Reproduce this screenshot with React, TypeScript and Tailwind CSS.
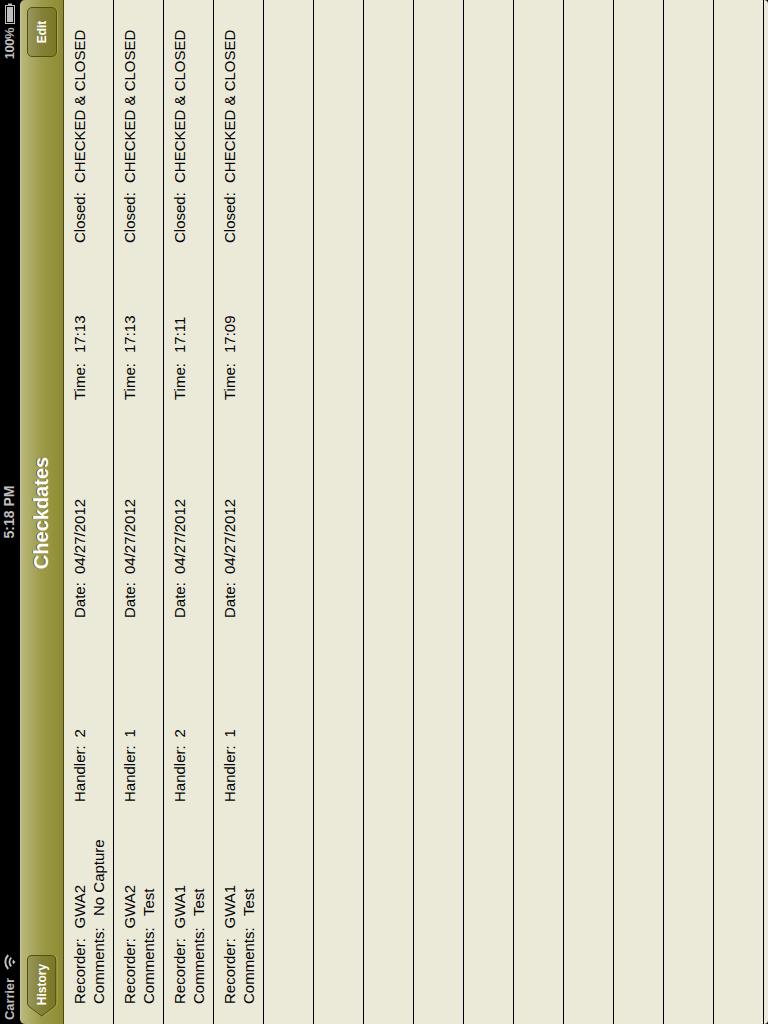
type Entry = { recorder: string; comments: string; handler: string; time: string };

const entries: Entry[] = [
  { recorder: "GWA2", comments: "No Capture", handler: "2", time: "17:13" },
  { recorder: "GWA2", comments: "Test", handler: "1", time: "17:13" },
  { recorder: "GWA1", comments: "Test", handler: "2", time: "17:11" },
  { recorder: "GWA1", comments: "Test", handler: "1", time: "17:09" },
];

const emptyRows = Array.from({ length: 10 }, (_, i) => i);

function Field({ label, value, labelClass }: { label: string; value: string; labelClass: string }) {
  return (
    <div className="flex whitespace-pre">
      <span className={`shrink-0 ${labelClass}`}>{label}</span>
      <span>{value}</span>
    </div>
  );
}

function StatusBar() {
  return (
    <div className="grid h-5 shrink-0 grid-cols-3 items-center bg-black text-[14px] leading-5 font-bold text-[#bfbfbf]">
      <div className="flex items-center pl-1">
        <span className="w-[50px] text-[13px] tracking-[-0.1px]">Carrier</span>
        <svg width="16" height="12" viewBox="0 0 16 12" fill="none" stroke="#bfbfbf" strokeWidth="2">
          <path d="M1 4.2C5 .4 11 .4 15 4.2" />
          <path d="M3.7 7.2C6.2 5 9.8 5 12.3 7.2" />
          <path d="M8 11.5 5.8 9.3C7 8.2 9 8.2 10.2 9.3Z" fill="#bfbfbf" stroke="none" />
        </svg>
      </div>
      <div className="pb-[2px] text-center leading-[18px]">5:18 PM</div>
      <div className="flex items-center justify-end gap-[4px] pr-[3px]">
        <span className="text-[13px] tracking-[-0.5px]">100%</span>
        <svg width="21" height="10" viewBox="0 0 21 10">
          <rect x=".5" y=".5" width="18" height="9" fill="#000" stroke="#bfbfbf" />
          <rect x="2" y="2" width="15" height="6" fill="#bfbfbf" />
          <path d="M19 3h1.5v4H19z" fill="#bfbfbf" />
        </svg>
      </div>
    </div>
  );
}

function NavBar() {
  return (
    <div className="bg-black">
      <div className="grid h-11 shrink-0 grid-cols-[1fr_auto_1fr] items-start rounded-t-[5px] border-t border-b border-t-[#c8c58f] border-b-[#4a4910] bg-linear-to-b from-[#bbb97a] via-[#9c9a48] to-[#8d8b30] px-[7px] pt-[6px] text-[12px] font-bold text-white [text-shadow:0_-1px_0_rgba(0,0,0,0.5)]">
        <button className="relative h-[31px] w-[63px] pb-[2px]">
          <svg className="absolute inset-0" width="63" height="31" viewBox="0 0 63 31">
            <defs>
              <linearGradient id="back" x1="0" y1="0" x2="0" y2="1">
                <stop offset="0" stopColor="#9a985c" />
                <stop offset=".5" stopColor="#838136" />
                <stop offset="1" stopColor="#7a7824" />
              </linearGradient>
            </defs>
            <path d="M1 15.5 10.5 2Q12 .8 14 .8H57Q61.5.8 61.5 5V25Q61.5 29 57 29H14Q12 29 10.5 27.5Z" transform="translate(0 1)" fill="none" stroke="#a9a75a" />
            <path d="M1 14.8 10.5 2Q12 .5 14 .5H57Q61.5.5 61.5 5V24.5Q61.5 28.7 57 28.7H14Q12 28.7 10.5 27.3Z" fill="url(#back)" stroke="#52510f" />
          </svg>
          <span className="relative left-[1px]">History</span>
        </button>
        <h1 className="relative -left-[1px] text-[20px] leading-7">Checkdates</h1>
        <button className="h-[30px] w-[50px] justify-self-end rounded-[5px] border border-[#52510f] bg-linear-to-b from-[#9a985c] via-[#838136] to-[#7a7824] shadow-[0_1px_0_#a9a75a]">
          Edit
        </button>
      </div>
    </div>
  );
}

function Row({ entry }: { entry?: Entry }) {
  return (
    <div className="grid h-[50px] shrink-0 grid-cols-[202px_184px_218px_157px_1fr] border-b border-black pt-[6px] pl-5 leading-[19px]">
      {entry && (
        <>
          <div>
            <Field label="Recorder:" value={entry.recorder} labelClass="w-[75.5px]" />
            <Field label="Comments:" value={entry.comments} labelClass="w-[88px]" />
          </div>
          <Field label="Handler:" value={entry.handler} labelClass="w-[64.5px]" />
          <Field label="Date:" value="04/27/2012" labelClass="w-[44px]" />
          <Field label="Time:" value={entry.time} labelClass="w-[47px]" />
          <Field label="Closed:" value="CHECKED & CLOSED" labelClass="w-[60px]" />
        </>
      )}
    </div>
  );
}

export default function App() {
  return (
    <div className="h-[1024px] w-[768px] overflow-hidden bg-black">
      <div className="flex h-[768px] w-[1024px] origin-top-left [transform:translateY(1024px)_rotate(-90deg)] flex-col font-['Liberation_Sans',Arial,sans-serif]">
        <StatusBar />
        <NavBar />
        <main className="flex min-h-0 flex-1 flex-col overflow-hidden rounded-b-[4px] bg-[#ebead9] text-[15px] text-black">
          {entries.map((entry, i) => (
            <Row key={i} entry={entry} />
          ))}
          {emptyRows.map((i) => (
            <Row key={i} />
          ))}
        </main>
      </div>
    </div>
  );
}
